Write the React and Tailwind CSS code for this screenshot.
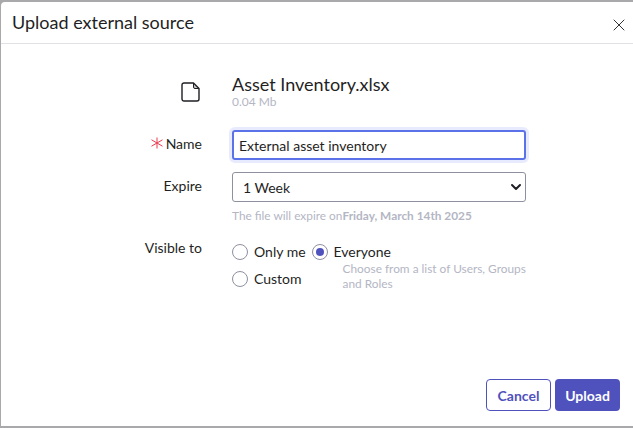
import React, { useState } from 'react';
import { X, ChevronDown } from 'lucide-react';

function Radio({ label, checked, onChange }) {
    return (
        <label className="flex items-center gap-[6px] text-[14px] leading-[18px] text-[#1f1f24]">
            <input type="radio" checked={checked} onChange={onChange} className="sr-only" />
            <span className="w-[16px] h-[16px] rounded-full border border-[#8e90a0] flex items-center justify-center bg-white">
                {checked && <span className="w-[8px] h-[8px] rounded-full bg-[#4f52bd]"></span>}
            </span>
            {label}
        </label>
    );
}

export default function App() {
    const [name, setName] = useState("External asset inventory");
    const [visible, setVisible] = useState("everyone");

    return (
        <div className="w-[633px] h-[428px] bg-[#a9a9ab] pt-[2px] pb-[2px] pl-px overflow-hidden font-['Lato',sans-serif]">
            <div className="h-full bg-white rounded-tl-[4px] flex flex-col">
                <div className="h-[42px] shrink-0 flex items-center justify-between pl-[11px] pr-[4px] border-b border-[#e0e0e6]">
                    <h1 className="text-[18px] leading-[24px] mt-[-2px] text-[#1f1f24]">Upload external source</h1>
                    <button className="mt-[4px] text-[#1f1f24]">
                        <X size={20} strokeWidth={1.1} />
                    </button>
                </div>

                <div className="flex-1 pt-[29px] grid grid-cols-[201px_294px] gap-x-[30px] content-start">
                    <div className="flex justify-end pr-[2px] pt-[9px] h-[57px]">
                        <svg width="19" height="20" viewBox="0 0 19 20" fill="none" stroke="#1f1f24" strokeWidth="1.4" strokeLinejoin="round">
                            <path d="M3 1h9.5L18 6.5V17a2 2 0 0 1-2 2H3a2 2 0 0 1-2-2V3a2 2 0 0 1 2-2z" />
                            <path d="M12.5 1v4a1.5 1.5 0 0 0 1.5 1.5h4" fill="#1f1f24" fillOpacity="0.25" strokeWidth="1" />
                        </svg>
                    </div>
                    <div className="h-[57px]">
                        <div className="text-[18px] leading-[22px] text-[#1f1f24]">Asset Inventory.xlsx</div>
                        <div className="text-[12px] leading-[14px] text-[#b4b6c4]">0.04 Mb</div>
                    </div>

                    <div className="flex justify-end items-center gap-[3px] h-[26px] text-[14px] text-[#1f1f24]">
                        <svg width="12" height="12" viewBox="0 0 12 12" fill="none" stroke="#ee3a4f" strokeWidth="1">
                            <path d="M6 0.5v11M0.5 2.8l11 6.4M11.5 2.8l-11 6.4" />
                        </svg>
                        Name
                    </div>
                    <input
                        value={name}
                        onChange={e => setName(e.target.value)}
                        className="h-[30px] w-full px-[5px] rounded-[3px] border-2 border-[#5b72e8] ring-[3px] ring-[#e8ebfd] outline-none text-[14px] text-[#1f1f24]"
                    />

                    <div className="mt-[12px] flex justify-end items-center h-[26px] text-[14px] text-[#1f1f24]">Expire</div>
                    <div className="mt-[12px] relative">
                        <select className="appearance-none h-[30px] w-full px-[10px] rounded-[3px] border border-[#8e90a0] bg-white outline-none text-[14px] text-[#1f1f24]">
                            <option>1 Week</option>
                            <option>1 Month</option>
                            <option>1 Year</option>
                        </select>
                        <ChevronDown size={16} strokeWidth={3} className="absolute right-[2px] top-[7px] text-[#1f1f24] pointer-events-none" />
                    </div>

                    <div></div>
                    <div className="mt-[6px] text-[11.85px] leading-[16px] text-[#b4b6c4]">
                        The file will expire on<span className="font-bold">Friday, March 14th 2025</span>
                    </div>

                    <div className="mt-[15px] text-right text-[14px] leading-[18px] text-[#1f1f24]">Visible to</div>
                    <div className="mt-[19px] grid grid-cols-[auto_1fr] gap-x-[6px] justify-start">
                        <Radio label="Only me" checked={visible === "me"} onChange={() => setVisible("me")} />
                        <Radio label="Everyone" checked={visible === "everyone"} onChange={() => setVisible("everyone")} />
                        <div className="mt-[9px]">
                            <Radio label="Custom" checked={visible === "custom"} onChange={() => setVisible("custom")} />
                        </div>
                        <div className="pl-[31px] text-[11.85px] leading-[15px] text-[#b4b6c4]">
                            Choose from a list of Users, Groups and Roles
                        </div>
                    </div>
                </div>

                <div className="flex justify-end gap-[4px] pr-[13px] pb-[15px]">
                    <button className="h-[32px] w-[65px] rounded-[4px] border border-[#4f52bd] bg-white text-[14px] font-bold text-[#4f52bd]">Cancel</button>
                    <button className="h-[32px] w-[65px] rounded-[4px] bg-[#4f52bd] text-[14px] font-bold text-white">Upload</button>
                </div>
            </div>
        </div>
    );
}
